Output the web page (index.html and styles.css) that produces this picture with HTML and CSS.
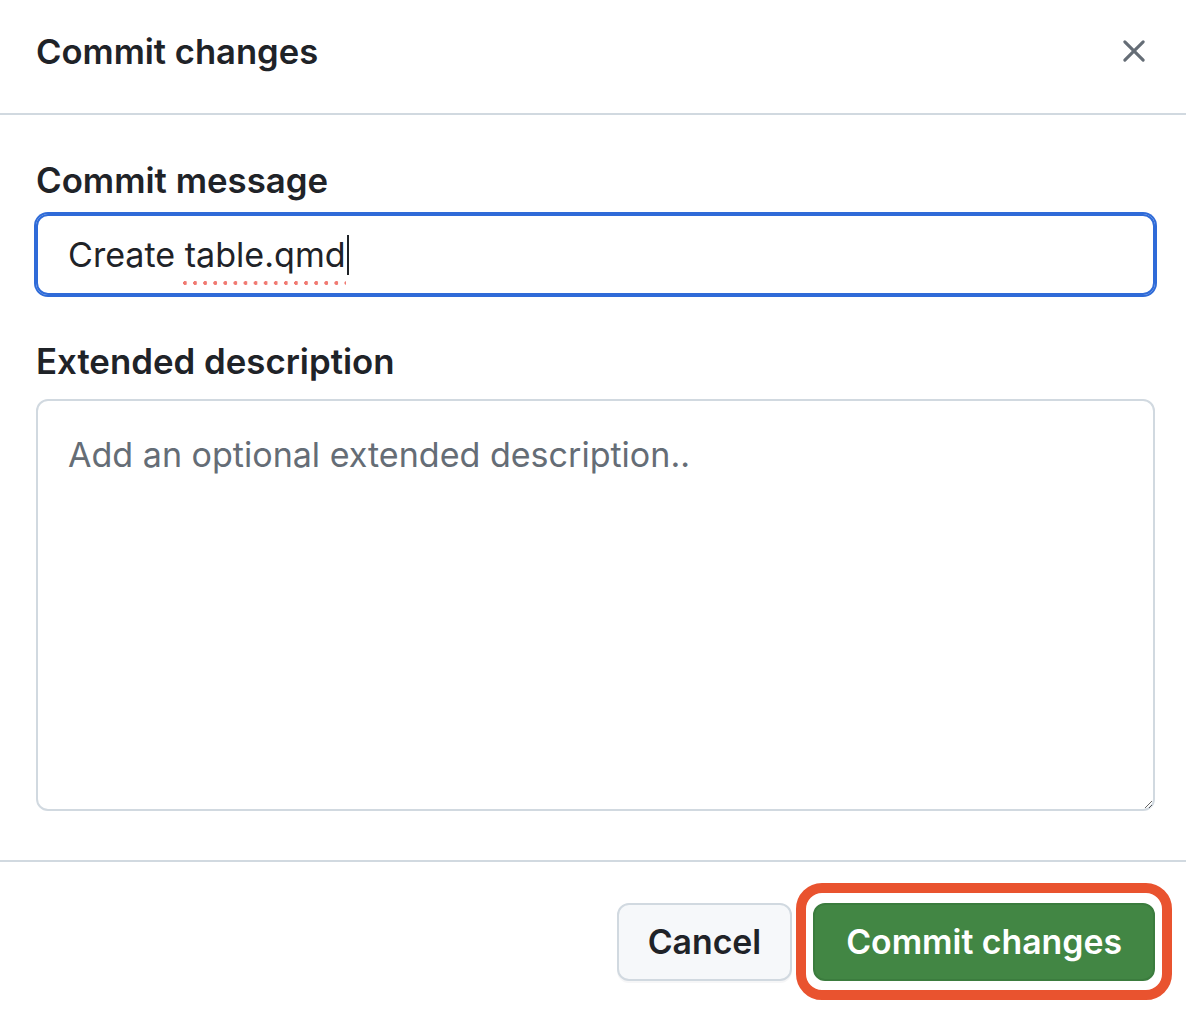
FILE: index.html
```html
<!DOCTYPE html>
<html lang="en">
<head>
<meta charset="utf-8">
<title>Commit changes</title>
<link rel="stylesheet" href="styles.css">
</head>
<body>
<div class="dialog" role="dialog" aria-labelledby="dlg-title">
  <header class="dlg-head">
    <h1 class="dlg-title" id="dlg-title">Commit changes</h1>
    <button class="close" type="button" aria-label="Close">
      <svg viewBox="0 0 24 24" width="24" height="24" aria-hidden="true">
        <path d="M2 2 L22 22 M22 2 L2 22" fill="none" stroke="currentColor" stroke-width="3.4" stroke-linecap="round"/>
      </svg>
    </button>
  </header>
  <div class="dlg-body">
    <label class="field-label" for="msg">Commit message</label>
    <div class="text-input" id="msg" role="textbox" tabindex="0">Create <span class="spell">table.qmd</span><span class="caret"></span></div>
    <label class="field-label second" for="desc">Extended description</label>
    <textarea class="text-area" id="desc" placeholder="Add an optional extended description.."></textarea>
  </div>
  <footer class="dlg-foot">
    <button class="btn" type="button">Cancel</button>
    <span class="highlight"><button class="btn btn-primary" type="button">Commit changes</button></span>
  </footer>
</div>
</body>
</html>
```

FILE: styles.css
```css
* { box-sizing: border-box; }

html, body {
  margin: 0;
  padding: 0;
  background: #ffffff;
}

body {
  font-family: Inter, "Noto Sans", "Liberation Sans", sans-serif;
  color: #1f2328;
  width: 1186px;
  height: 1010px;
  overflow: hidden;
}

.dialog {
  display: flex;
  flex-direction: column;
  height: 1010px;
}

.dlg-head {
  display: flex;
  flex: none;
  align-items: center;
  justify-content: space-between;
  height: 115px;
  padding: 0 41px 12px 36px;
  border-bottom: 2px solid #d1d9e0;
}

.dlg-title {
  margin: 0;
  font-size: 34.6px;
  font-weight: 600;
  line-height: 44px;
  letter-spacing: 0;
}

.close {
  display: flex;
  align-items: center;
  justify-content: center;
  width: 22px;
  height: 22px;
  padding: 0;
  border: 0;
  background: transparent;
  color: #656d76;
}

.close svg {
  width: 22px;
  height: 22px;
  overflow: visible;
}

.dlg-body {
  display: flex;
  flex: none;
  flex-direction: column;
  padding: 43px 31px 49px 36px;
}

.field-label {
  font-size: 34.8px;
  font-weight: 600;
  line-height: 44px;
  margin-bottom: 12px;
}

.field-label.second {
  margin-top: 44px;
  margin-bottom: 16px;
}

.text-input {
  display: flex;
  align-items: center;
  height: 81px;
  padding: 0 30px;
  border: 2px solid #2f6bd8;
  border-radius: 12px;
  box-shadow: 0 0 0 2px #2f6bd8;
  font-size: 34.1px;
  line-height: 44px;
  color: #1f2328;
  white-space: pre;
  outline: none;
}

.spell {
  position: relative;
}

.spell::after {
  content: "";
  position: absolute;
  left: -2px;
  right: 0;
  bottom: -8px;
  height: 4px;
  background-image: radial-gradient(circle at 2px 2px, #f07a72 1.8px, transparent 2.2px);
  background-size: 10.1px 4px;
  background-repeat: repeat-x;
  pointer-events: none;
}

.caret {
  display: inline-block;
  width: 2px;
  height: 40px;
  margin-left: 1px;
  background: #1f2328;
}

.text-area {
  display: block;
  width: 100%;
  height: 412px;
  margin: 0;
  padding: 33px 30px;
  border: 2px solid #d1d9e0;
  border-radius: 12px;
  font-family: inherit;
  font-size: 34.05px;
  line-height: 42px;
  color: #1f2328;
  background: #ffffff;
  resize: both;
  outline: none;
}

.text-area::placeholder {
  color: #656d76;
  opacity: 1;
}

.dlg-foot {
  display: flex;
  flex: none;
  justify-content: flex-end;
  align-items: center;
  gap: 21px;
  padding: 41px 31px 29px 36px;
  border-top: 2px solid #d1d9e0;
}

.btn {
  display: inline-flex;
  align-items: center;
  justify-content: center;
  height: 78px;
  padding: 0 29px;
  border: 2px solid #d1d9e0;
  border-radius: 12px;
  background: #f6f8fa;
  color: #1f2328;
  font-family: inherit;
  font-size: 33.8px;
  font-weight: 600;
  line-height: 1;
  box-shadow: 0 2px 0 rgba(31, 35, 40, 0.04);
}

.btn-primary {
  padding: 0 31px;
  background: #428644;
  border-color: #3b7c3e;
  color: #ffffff;
  box-shadow: none;
}

.highlight {
  position: relative;
  display: inline-flex;
}

.highlight::after {
  content: "";
  position: absolute;
  top: -20px;
  bottom: -19px;
  left: -17px;
  right: -17px;
  border: 10px solid #e9532f;
  border-radius: 26px;
  pointer-events: none;
}
```
